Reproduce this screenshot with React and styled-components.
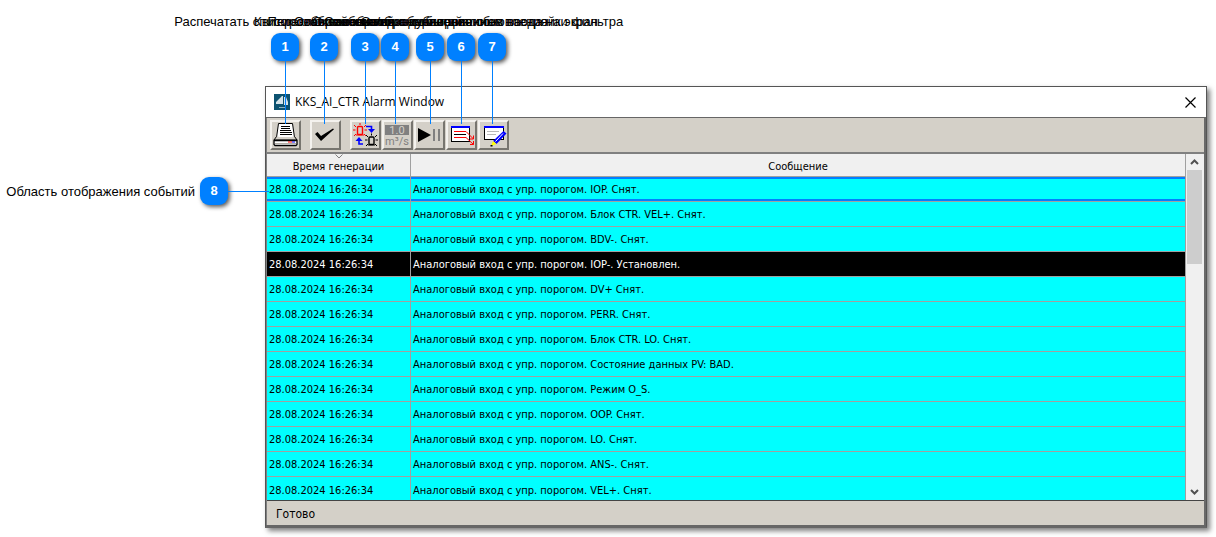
import React, { useState } from 'react';
import styled, { createGlobalStyle, css } from 'styled-components';

const GlobalStyle = createGlobalStyle`
  * {
    box-sizing: border-box;
  }
  body {
    margin: 0;
    background: #ffffff;
    color: #000000;
    font-family: 'Liberation Sans', Arial, sans-serif;
  }
`;

const tahoma = "'DejaVu Sans Condensed', Tahoma, 'DejaVu Sans', sans-serif";
const segoe = "'Open Sans', 'Segoe UI', 'Noto Sans', sans-serif";

const Page = styled.main`
  position: relative;
  display: grid;
  grid-template-columns: 265px minmax(0, 1fr);
  padding: 86px 9px 9px 0;
  overflow: hidden;
`;

const Aside = styled.div`
  display: flex;
  align-items: center;
  justify-content: flex-end;
  align-self: start;
  gap: 5px;
  margin: 91px 37px 0 0;
`;

const Label = styled.span`
  font-size: 13px;
  line-height: 17px;
  white-space: nowrap;
`;

const Badge = styled.span`
  flex: none;
  width: 28px;
  height: 28px;
  border-radius: 9px;
  background: #0080ff;
  box-shadow: 2px 2px 4px rgba(0, 0, 0, 0.65);
  color: #ffffff;
  font-size: 13px;
  font-weight: bold;
  line-height: 28px;
  text-align: center;
`;

/* Callouts lie over the window, each one points at its button */
const Callout = styled.div`
  position: absolute;
  z-index: 2;
  top: 13px;
  left: ${({ $x }) => $x}px;
  display: flex;
  flex-direction: column;
  align-items: center;
  width: 28px;
  pointer-events: none;

  ${Badge} {
    margin-top: 3px;
  }
`;

const Leader = styled.span`
  width: 1px;
  height: 63px;
  background: #0080ff;
`;

const SideLeader = styled.span`
  position: absolute;
  z-index: 2;
  top: 191px;
  left: 228px;
  width: 41px;
  height: 1px;
  background: #0080ff;
`;

const Window = styled.section`
  border: 1px solid #555555;
  border-bottom: 3px solid #666666;
  background: #d4d0c8;
  box-shadow: 3px 3px 5px rgba(0, 0, 0, 0.5);
`;

const TitleBar = styled.header`
  display: flex;
  align-items: center;
  height: 31px;
  padding: 0 10px 0 8px;
  border-bottom: 1px solid #666666;
  background: #ffffff;
`;

const Title = styled.h1`
  flex: 1;
  margin: 0 0 0 5px;
  font-family: ${segoe};
  font-size: 12px;
  font-weight: normal;
  line-height: 16px;
`;

const CloseButton = styled.button`
  display: flex;
  padding: 0;
  border: 0;
  background: none;
`;

const Content = styled.div`
  border-left: 1px solid #808080;
  border-right: 2px solid #696969;
`;

const Toolbar = styled.div`
  display: flex;
  gap: 1px;
  height: 36px;
  padding: 2px 3px;
  border-bottom: 2px solid #808080;
`;

const ToolButton = styled.button`
  display: flex;
  width: 31px;
  height: 30px;
  margin-right: ${({ $apart }) => ($apart ? 8 : 0)}px;
  padding: 0;
  border: 2px solid;
  border-color: #f4f2ee #77756f #77756f #f4f2ee;
  background: #d4d0c8;
`;

const List = styled.div`
  display: flex;
`;

const Table = styled.table`
  flex: 1;
  table-layout: fixed;
  border-collapse: separate;
  border-spacing: 0;
  font-family: ${tahoma};
  font-size: 11px;
  line-height: 14px;
`;

const HeadCell = styled.th`
  position: relative;
  width: ${({ $width }) => $width || 'auto'};
  height: 23px;
  padding: 4px 0 0;
  border-bottom: 1px solid #a0a0a0;
  background: #f0f0f0;
  font-weight: normal;

  & + & {
    border-left: 1px solid #a0a0a0;
  }
`;

const SortMark = styled.svg`
  position: absolute;
  top: 0;
  left: 50%;
  transform: translateX(-50%);
`;

const Cell = styled.td`
  height: 25px;
  padding: 2px 2px 0;
  border-bottom: 1px solid #a0a0a0;
  white-space: nowrap;
  overflow: hidden;

  & + & {
    border-left: 1px solid #a0a0a0;
  }
`;

const Row = styled.tr`
  background: ${({ $raised }) => ($raised ? '#000000' : '#00ffff')};
  color: ${({ $raised }) => ($raised ? '#ffffff' : '#000000')};

  ${({ $selected }) => $selected && css`
    ${Cell} {
      box-shadow: inset 0 2px #0080ff, inset 0 -2px #0080ff;
    }
  `}

  &:last-child ${Cell} {
    height: 23px;
    padding-top: 4px;
    border-bottom: 0;
  }
`;

const ScrollBar = styled.div`
  display: flex;
  flex-direction: column;
  width: 19px;
  padding: 0 2px 0 1px;
  border-left: 1px solid #a0a0a0;
  background: #f0f0f0;
`;

const ScrollTrack = styled.div`
  flex: 1;
`;

const ScrollThumb = styled.div`
  height: 30%;
  background: #cdcdcd;
`;

const ScrollButton = styled.button`
  display: flex;
  align-items: center;
  justify-content: center;
  height: 16px;
  padding: 0;
  border: 0;
  background: none;
`;

const StatusBar = styled.footer`
  height: 25px;
  padding: 0 9px;
  border-top: 1px solid #444444;
  font-family: ${tahoma};
  font-size: 12px;
  line-height: 27px;
`;

const PrintIcon = () => (
  <svg width="27" height="25">
    <path d="M6.500 1.500h14l2 14h-18z" fill="#fff" stroke="#000" />
    <path d="M9 4.500h9M9 6.500h9M8 8.500h11M8 10.500h12M8 12.500h12" stroke="#000" shapeRendering="crispEdges" />
    <path d="M4.500 14.500l-2.500 3.500h23l-2.500-3.500" fill="#d4d0c8" stroke="#000" />
    <path d="M6.500 14.500h14" stroke="#fff" />
    <path d="M2 18.500h23v4l-1 1H3l-1-1z" fill="#fff" stroke="#000" strokeWidth="1.300" />
    <path d="M3 21.500h21" stroke="#b0aca4" />
    <path d="M16 20h4" stroke="#f00" />
    <path d="M20 20h3" stroke="#00f" />
  </svg>
);

const CheckIcon = () => (
  <svg width="27" height="25">
    <path d="M3 12l2.500-2 3.500 4L21 6.500l1 .8L9 19z" fill="#000" />
  </svg>
);

const LampIcon = () => (
  <svg width="27" height="25" fill="none">
    <rect x="5.500" y="4.500" width="5" height="8" rx="1" stroke="#f00" strokeWidth="1.400" />
    <path d="M4 13h8M2 3l2 2M1 8h2.500M2 14l2-2M14 3l-2 2M12.500 8H15M14 14l-2-2M8 1v2" stroke="#f00" />
    <rect x="17" y="15" width="5" height="7.500" rx="1" stroke="#000" strokeWidth="1.400" />
    <path d="M16 23h7M14 13l2 2M13 18h2.500M14 24l2-2M25 13l-2 2M23.500 18H26M25 24l-2-2M19.500 11.500v2" stroke="#000" />
    <path d="M14 4.500h5.500v3" stroke="#00f" strokeWidth="1.600" />
    <path d="M16 7h7l-3.500 4z" fill="#00f" />
    <path d="M11 22h-4v-3" stroke="#00f" strokeWidth="1.600" />
    <path d="M3.500 19h7L7 15z" fill="#00f" />
  </svg>
);

const UnitsIcon = () => (
  <svg width="27" height="25" fontFamily="Roboto, Arial, sans-serif" textAnchor="middle">
    <rect x="1" y="3" width="24" height="10" fill="#808080" />
    <text x="13" y="12" fontSize="11" fill="#d4d0c8">1.0</text>
    <text x="13" y="23" fontSize="11" fill="#808080">m³/s</text>
  </svg>
);

const PauseIcon = () => (
  <svg width="27" height="25">
    <path d="M2 6v14l13-7z" fill="#000" />
    <path d="M17 7h2v12h-2zM22 7h2v12h-2z" fill="#808080" />
  </svg>
);

const DetailsIcon = () => (
  <svg width="27" height="25" fill="none">
    <path d="M3.500 4.500h18v15h-18z" fill="#fff" stroke="#000" shapeRendering="crispEdges" />
    <path d="M3 5h19" stroke="#00f" strokeWidth="2" shapeRendering="crispEdges" />
    <path d="M6 9.500h12M6 15.500h12" stroke="#f00" shapeRendering="crispEdges" />
    <path d="M6 12.500h12" stroke="#000" shapeRendering="crispEdges" />
    <path d="M18 9.500l7.500 7.500M18 15.500l7.500 7M25.500 13.500V17H22M25.500 19v3.500H22" stroke="#f00" />
  </svg>
);

const FilterIcon = () => (
  <svg width="27" height="25">
    <path d="M4.500 5.500h19v12h-19z" fill="#fff" stroke="#000" shapeRendering="crispEdges" />
    <path d="M4 5h20" stroke="#00f" strokeWidth="2" shapeRendering="crispEdges" />
    <path d="M7 9.500h12M7 12.500h9" stroke="#b8b8b8" shapeRendering="crispEdges" />
    <path d="M23.500 9l3 2.500-10 10.500-3.500-3z" fill="#00f" />
    <path d="M23 11.500l-7.500 8" stroke="#fff" />
    <path d="M13 19l3.500 3-5.500 2z" fill="#ff0" />
    <path d="M10.500 23h2v1.500h-2z" fill="#000" />
  </svg>
);

const AppIcon = () => (
  <svg width="16" height="16">
    <rect width="16" height="16" fill="#0d5371" />
    <path d="M2 10V8l6-6h1v8zM10 3h2l2 5v3h-4z" fill="#d5e3e9" />
    <path d="M5 13.500h6" stroke="#8fb1bf" />
  </svg>
);

const tools = [
  { id: 1, x: 271, label: 'Распечатать список событий из окна', Icon: PrintIcon, apart: true },
  { id: 2, x: 310, label: 'Квитирование событий', Icon: CheckIcon, apart: true },
  { id: 3, x: 351, label: 'Переключение списков событий', Icon: LampIcon },
  { id: 4, x: 381, label: 'Отображение единицы величины', Icon: UnitsIcon },
  { id: 5, x: 416, label: 'Остановка/возобновление обновления', Icon: PauseIcon },
  { id: 6, x: 447, label: 'Сообщения с дублированием ввода на экран', Icon: DetailsIcon },
  { id: 7, x: 478, label: 'Отображение диалогов настройки фильтра', Icon: FilterIcon },
];

const events = [
  'IOP. Снят.',
  'Блок CTR. VEL+. Снят.',
  'BDV-. Снят.',
  'IOP-. Установлен.',
  'DV+ Снят.',
  'PERR. Снят.',
  'Блок CTR. LO. Снят.',
  'Состояние данных PV: BAD.',
  'Режим O_S.',
  'OOP. Снят.',
  'LO. Снят.',
  'ANS-. Снят.',
  'VEL+. Снят.',
];

export default function App() {
  const [selected, setSelected] = useState(0);

  return (
    <Page>
      <GlobalStyle />
      {tools.map(({ id, x, label }) => (
        <Callout key={id} $x={x}>
          <Label>{label}</Label>
          <Badge>{id}</Badge>
          <Leader />
        </Callout>
      ))}

      <Aside>
        <Label>Область отображения событий</Label>
        <Badge>8</Badge>
      </Aside>
      <SideLeader />

      <Window>
        <TitleBar>
          <AppIcon />
          <Title>KKS_AI_CTR Alarm Window</Title>
          <CloseButton type="button" aria-label="Закрыть">
            <svg width="11" height="11">
              <path d="M.5.5l10 10M10.500.5l-10 10" stroke="#000" strokeWidth="1.200" />
            </svg>
          </CloseButton>
        </TitleBar>
        <Content>
          <Toolbar>
            {tools.map(({ id, label, Icon, apart }) => (
              <ToolButton key={id} type="button" aria-label={label} $apart={apart}>
                <Icon />
              </ToolButton>
            ))}
          </Toolbar>
          <List>
            <Table>
              <thead>
                <tr>
                  <HeadCell $width="143px">
                    <SortMark width="8" height="5">
                      <path d="M.5.5L4 4 7.500.5" fill="none" stroke="#808080" />
                    </SortMark>
                    Время генерации
                  </HeadCell>
                  <HeadCell>Сообщение</HeadCell>
                </tr>
              </thead>
              <tbody>
                {events.map((text, index) => (
                  <Row
                    key={text}
                    $selected={index === selected}
                    $raised={text.includes('Установлен')}
                    onClick={() => setSelected(index)}
                  >
                    <Cell>28.08.2024 16:26:34</Cell>
                    <Cell>Аналоговый вход с упр. порогом. {text}</Cell>
                  </Row>
                ))}
              </tbody>
            </Table>
            <ScrollBar>
              <ScrollButton type="button" aria-label="Вверх">
                <svg width="9" height="6">
                  <path d="M1 5l3.500-3.500L8 5" fill="none" stroke="#505050" strokeWidth="2" />
                </svg>
              </ScrollButton>
              <ScrollTrack>
                <ScrollThumb />
              </ScrollTrack>
              <ScrollButton type="button" aria-label="Вниз">
                <svg width="9" height="6">
                  <path d="M1 1l3.500 3.500L8 1" fill="none" stroke="#505050" strokeWidth="2" />
                </svg>
              </ScrollButton>
            </ScrollBar>
          </List>
          <StatusBar>Готово</StatusBar>
        </Content>
      </Window>
    </Page>
  );
}
